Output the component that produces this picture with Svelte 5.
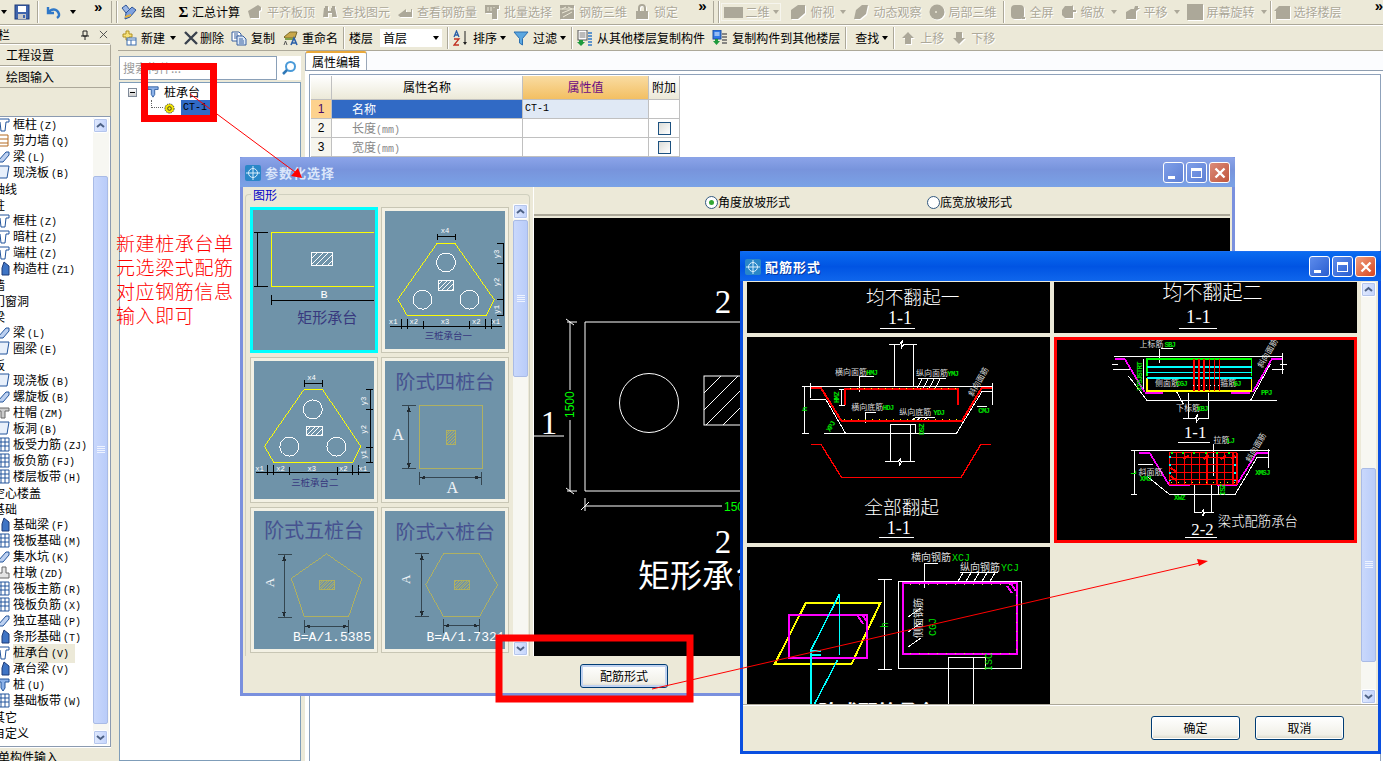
<script>
  const ICONS = {
    save: '<rect x="1" y="1" width="14" height="14" fill="#3f64ad" stroke="#1d3a78"/><rect x="4" y="2" width="8" height="6" fill="#fff"/><rect x="4" y="10" width="8" height="5" fill="#c8c8c8"/><rect x="9" y="11" width="2" height="3" fill="#3f64ad"/>',
    undo: '<path d="M3 3v6h6M3.5 8.5C6 4.500 12 4 14 10c.4 1.600-.6 3-2 4" fill="none" stroke="#2f78c8" stroke-width="2.400"/>',
    draw: '<path d="M1 4l4-3 4 5-4 3z" fill="#9bb7e6" stroke="#2f5597"/><path d="M5 9l6-6 4 3-6 7-5 2z" fill="#7fa2e0" stroke="#2f5597"/><path d="M4 13l6-2" stroke="#e0b040" stroke-width="2"/>',
    newi: '<path d="M2 4h3V1h3v3h3v3H8v3H5V7H2z" fill="#f7e27a" stroke="#b09020"/><rect x="6" y="8" width="9" height="7" fill="#fff" stroke="#3c6fb0"/><path d="M6 10h9M10 10v5" stroke="#3c6fb0"/>',
    del: '<path d="M2 2l12 12M14 2L2 14" stroke="#39414d" stroke-width="2.400"/>',
    copy: '<path d="M1 2h7l2 2v7H1z" fill="#fff" stroke="#38609f"/><path d="M3 4h4M3 6h5M3 8h5" stroke="#38609f"/><path d="M6 6h6l3 3v6H6z" fill="#dbe7f6" stroke="#38609f"/><path d="M8 9h4M8 11h5M8 13h5" stroke="#38609f"/>',
    ren: '<path d="M2 7l6-5h7l-2 6H3z" fill="#c8a84a" stroke="#7a6a2a"/><path d="M3 8h10v2H3z" fill="#7fa04a"/><path d="M9 15l3-7 3 7M10 13h4" fill="none" stroke="#2a5fa8" stroke-width="1.600"/><path d="M2 15l1.500-4 1.500 4" fill="none" stroke="#555"/>',
    sort: '<path d="M12 1v13" stroke="#222"/><path d="M10 12l2 3 2-3z" fill="#222"/><path d="M1 7l2.500-6L6 7M2 5h3" fill="none" stroke="#2a5fa8" stroke-width="1.300"/><path d="M1 9h5l-5 6h5" fill="none" stroke="#c03020" stroke-width="1.300"/>',
    filter: '<path d="M1 2h14L9.500 8.500V15l-3-2V8.500z" fill="#5ba7e0" stroke="#2a6fb0"/>',
    floorA: '<rect x="1" y="0" width="9" height="10" fill="#fff" stroke="#555"/><path d="M2.500 3h6M2.500 5h6M2.500 7h6" stroke="#777"/><path d="M2 10h4v2h2l-4 4-4-4h2z" fill="#1e9a3c"/><path d="M11 3h4M11 6h4M11 9h4M11 12h4M11 15h4" stroke="#2f78c8" stroke-width="1.500"/>',
    floorB: '<rect x="1" y="0" width="8" height="9" fill="#2f78e8" stroke="#2050a0"/><path d="M2.500 3h5M2.500 5h5" stroke="#fff"/><path d="M3 9h3v2h2l-3.500 4L1 11h2z" fill="#1e9a3c"/><path d="M10 4h5M10 7h5M10 10h5M10 13h5" stroke="#666" stroke-width="1.500"/>',
    col: '<path d="M1 2h12v3h-3l-1 9H5L4 5H1z" fill="#fff" stroke="#23559c"/>',
    wall: '<path d="M2 2h10v11H2z" fill="#fff" stroke="#b36a20"/><path d="M2 6h10M2 10h10" stroke="#b36a20"/>',
    beam: '<path d="M2 12l8-9h3v3L7 13H2z" fill="#bcd0f0" stroke="#23559c"/>',
    slab: '<path d="M3 1h10l-2 12H1z" fill="#e8f0fb" stroke="#23559c"/>',
    foot: '<path d="M8 1l5 4v9H6V7z" fill="#3f74c4" stroke="#1d3a78"/>',
    net: '<path d="M1 1h12v13H1z" fill="#fff" stroke="#23559c"/><path d="M1 5h12M1 9h12M5 1v13M9 1v13" stroke="#23559c"/>',
    pile: '<path d="M1 2h12v3H9v6l-2 3-2-3V5H1z" fill="#8db2e8" stroke="#23559c"/>',
    pier: '<path d="M6 2h4v6h3v5H1V8h5z" fill="#e4e4e4" stroke="#666"/>',
    cap: '<path d="M1 3h12v3H9v7H5V6H1z" fill="#ccc" stroke="#666"/>',
    g_down: '<path d="M5 2h6v6h3l-6 6-6-6h3z" fill="#aca899"/>',
    g_up: '<path d="M5 14h6V8h3L8 2 2 8h3z" fill="#aca899"/>',
    d_roof: '<path d="M1 7L11 1l3 2v3l-2 1v7H3z" fill="#aca899"/>',
    d_bin: '<path d="M2 4h4v3h3V4h4l2 9h-5V9H6v4H1z" fill="#aca899"/><path d="M3 2h3v2H3zM10 2h3v2h-3z" fill="#aca899"/>',
    d_rebar: '<path d="M1 11l8-6v3h5V5h1v8H3z" fill="#aca899"/>',
    d_batch: '<path d="M1 1h14v4h-2v10h-5V9H1z" fill="#aca899"/><path d="M4 3v4M7 3v4M10 3v1" stroke="#ece9d8"/>',
    d_net: '<rect x="1" y="1" width="14" height="14" fill="#aca899"/><path d="M3 5l4-2M9 3l4 2M3 9l10-4M4 13l9-5M1 5h14" stroke="#ece9d8"/>',
    d_lock: '<rect x="2" y="7" width="12" height="8" fill="#aca899"/><path d="M5 7V4a3 3 0 0 1 6 0v3" fill="none" stroke="#aca899" stroke-width="2"/>',
    d_box: '<path d="M1 6l7-5h7v8l-7 6H1z" fill="#aca899"/>',
    d_orbit: '<path d="M1 15l2-9 6-5h6l-2 9-6 5z" fill="#aca899"/>',
    d_ball: '<circle cx="8" cy="8" r="7.500" fill="#aca899"/><circle cx="7" cy="8" r="1" fill="#ece9d8"/>',
    d_full: '<rect x="1" y="1" width="13" height="14" rx="4" fill="#aca899"/><path d="M12 13h3v2h-3z" fill="#aca899"/>',
    d_zoom: '<path d="M1 6l3-4h7l1-1v5h3v2h-3v6H4l-3-3z" fill="#aca899"/>',
    d_pan: '<path d="M2 15V8l5-3h3l1-3h3v2h2L12 7v8z" fill="#aca899"/>',
    d_rot: '<rect x="0" y="0" width="16" height="16" fill="#aca899"/>',
    d_floor: '<path d="M0 7l5-5h11v13H2V7z" fill="#aca899"/>'
  };

  const tb1 = [
    { t: '平齐板顶', i: 'd_roof' }, { t: '查找图元', i: 'd_bin' }, { t: '查看钢筋量', i: 'd_rebar' },
    { t: '批量选择', i: 'd_batch' }, { t: '钢筋三维', i: 'd_net' }, { t: '锁定', i: 'd_lock' }
  ];
  const tb1b = [
    { t: '俯视', i: 'd_box', c: 1 }, { t: '动态观察', i: 'd_orbit' }, { t: '局部三维', i: 'd_ball' }
  ];
  const tb1c = [
    { t: '全屏', i: 'd_full' }, { t: '缩放', i: 'd_zoom', c: 1 }, { t: '平移', i: 'd_pan', c: 1 }, { t: '屏幕旋转', i: 'd_rot', c: 1 }
  ];

  const list = [
    ['框柱', '(Z)', 'col'], ['剪力墙', '(Q)', 'wall'], ['梁', '(L)', 'beam'], ['现浇板', '(B)', 'slab'], ['轴线'], ['柱'],
    ['框柱', '(Z)', 'col'], ['暗柱', '(Z)', 'col'], ['端柱', '(Z)', 'col'], ['构造柱', '(Z1)', 'foot'], ['墙'], ['门窗洞'], ['梁'],
    ['梁', '(L)', 'beam'], ['圈梁', '(E)', 'slab'], ['板'], ['现浇板', '(B)', 'slab'], ['螺旋板', '(B)', 'beam'], ['柱帽', '(ZM)', 'cap'],
    ['板洞', '(B)', 'slab'], ['板受力筋', '(ZJ)', 'net'], ['板负筋', '(FJ)', 'net'], ['楼层板带', '(H)', 'net'], ['空心楼盖'], ['基础'],
    ['基础梁', '(F)', 'foot'], ['筏板基础', '(M)', 'net'], ['集水坑', '(K)', 'beam'], ['柱墩', '(ZD)', 'pier'], ['筏板主筋', '(R)', 'net'],
    ['筏板负筋', '(X)', 'net'], ['独立基础', '(P)', 'beam'], ['条形基础', '(T)', 'foot'], ['桩承台', '(V)', 'col', 1], ['承台梁', '(V)', 'foot'],
    ['桩', '(U)', 'pile'], ['基础板带', '(W)', 'net'], ['其它'], ['自定义']
  ];

  const rows = [
    { n: 1, k: '名称', v: 'CT-1', sel: true },
    { n: 2, k: '长度(mm)', chk: true },
    { n: 3, k: '宽度(mm)', chk: true }
  ];

  function hatch(x, y, w, h, step) {
    let d = '';
    for (let c = step; c < w + h; c += step) {
      const x1 = x + Math.min(c, w), y1 = y + Math.max(0, c - w);
      const x2 = x + Math.max(0, c - h), y2 = y + Math.min(c, h);
      d += `M${x1} ${y1}L${x2} ${y2}`;
    }
    return d;
  }
  const gridV = [358, 380, 403, 425, 448, 470, 500, 522, 548, 560];
  const gridH = [610, 625, 645, 670, 690, 705];
  const redV = [432, 447, 462, 477, 492, 507];
</script>

{#snippet ico(name)}
  <svg class="ico" class:ghost={name.startsWith('d_') || name.startsWith('g_')} viewBox="0 0 16 16">{@html ICONS[name]}</svg>
{/snippet}

{#snippet toolItem(it)}
  <span class="tool off">{@render ico(it.i)}<span>{it.t}</span>{#if it.c}<i class="caret dim"></i>{/if}</span>
{/snippet}

{#snippet scrollbar(h, top, thumb)}
  <div class="sb" style="height:{h}px">
    <div class="sbtn"><svg viewBox="0 0 9 7"><path d="M1 5l3.500-3L8 5" fill="none" stroke="#4d6185" stroke-width="2"/></svg></div>
    <div style="height:{top}px"></div>
    <div class="thumb" style="height:{thumb}px"><svg viewBox="0 0 8 8"><path d="M0 .5h8M0 2.500h8M0 4.500h8M0 6.500h8" stroke="#eef3ff"/></svg></div>
    <div class="sbgap"></div>
    <div class="sbtn"><svg viewBox="0 0 9 7"><path d="M1 2l3.500 3L8 2" fill="none" stroke="#4d6185" stroke-width="2"/></svg></div>
  </div>
{/snippet}

{#snippet winBtns()}
  <div class="wbtns">
    <span class="wb"><i class="wmin"></i></span>
    <span class="wb"><i class="wmax"></i></span>
    <span class="wb wclose"><svg viewBox="0 0 12 12"><path d="M1.500 1.500l9 9M10.500 1.500l-9 9" stroke="#fff" stroke-width="2.400"/></svg></span>
  </div>
{/snippet}

{#snippet logo()}
  <svg class="logo" viewBox="0 0 16 16"><rect width="16" height="16" rx="2" fill="#2a87c8"/><circle cx="8" cy="8" r="4.500" fill="none" stroke="#d8eefc"/><path d="M8 1v14M1 8h14" stroke="#d8eefc"/></svg>
{/snippet}

<div class="desk">
  <!-- top toolbar -->
  <div class="tb1">
    <div class="tb1left">
      <i class="caret"></i>
      {@render ico('save')}
      <b class="vsep"></b>
      {@render ico('undo')}
      <i class="caret"></i>
      <span class="more">»</span>
    </div>
    <b class="grip gfirst"></b>
    <span class="tool">{@render ico('draw')}<span>绘图</span></span>
    <span class="tool sum"><em>Σ</em><span>汇总计算</span></span>
    {#each tb1 as it}{@render toolItem(it)}{/each}
    <span class="more m25">»</span>
    <b class="grip"></b>
    <span class="combo2"><i class="sw"></i>二维<i class="caret dim"></i></span>
    {#each tb1b as it}{@render toolItem(it)}{/each}
    <b class="vsep"></b>
    {#each tb1c as it}{@render toolItem(it)}{/each}
    <b class="vsep vtight"></b>
    <span class="tool off">{@render ico('d_floor')}<span>选择楼层</span></span>
    <span class="more mr">»</span>
  </div>

  <div class="main">
    <!-- navigation column -->
    <aside class="nav">
      <div class="navtitle"><span>栏</span>
        <svg class="pin" viewBox="0 0 10 10"><path d="M3 1h4v5H3zM1 6h8M5 6v4" fill="none" stroke="#222"/></svg>
        <svg class="pinx" viewBox="0 0 10 10"><path d="M1 1l8 8M9 1l-8 8" stroke="#444"/></svg>
      </div>
      <div class="navbtn">工程设置</div>
      <div class="navbtn">绘图输入</div>
      <div class="navblank"></div>
      <div class="navlist">
        <div class="items">
          {#each list as r}
            {#if r.length === 1}
              <div class="grp">{r[0]}</div>
            {:else}
              <div class="item"><svg class="lico" viewBox="0 0 14 16">{@html ICONS[r[2]]}</svg><span class="lab" class:hi={r[3]}>{r[0]}<small>{r[1]}</small></span></div>
            {/if}
          {/each}
        </div>
        {@render scrollbar(627, 43, 548)}
      </div>
      <div class="navfoot">单构件输入</div>
    </aside>
    <div class="vsplit"></div>

    <div class="work">
      <div class="tb2">
        <span class="tool t-new">{@render ico('newi')}<span>新建</span><i class="caret"></i></span>
        <span class="tool t-del">{@render ico('del')}<span>删除</span></span>
        <span class="tool">{@render ico('copy')}<span>复制</span></span>
        <span class="tool">{@render ico('ren')}<span>重命名</span></span>
        <b class="vsep"></b>
        <span class="lbl">楼层</span>
        <span class="combo"><span>首层</span><i class="caret"></i></span>
        <b class="vsep"></b>
        <span class="tool">{@render ico('sort')}<span>排序</span><i class="caret"></i></span>
        <span class="tool">{@render ico('filter')}<span>过滤</span><i class="caret"></i></span>
        <b class="vsep"></b>
        <span class="tool">{@render ico('floorA')}<span>从其他楼层复制构件</span></span>
        <span class="tool">{@render ico('floorB')}<span>复制构件到其他楼层</span></span>
        <b class="vsep"></b>
        <span class="lbl find">查找<i class="caret"></i></span>
        <b class="vsep"></b>
        <span class="tool off up">{@render ico('g_up')}<span>上移</span></span>
        <span class="tool off">{@render ico('g_down')}<span>下移</span></span>
      </div>

      <div class="panes">
        <section class="comp">
          <div class="search">
            <div class="sinput">搜索构件...</div>
            <svg class="sglass" viewBox="0 0 16 16"><circle cx="9.500" cy="6.500" r="4.500" fill="#fff" stroke="#4a9ad8" stroke-width="2"/><path d="M6 10l-4 4" stroke="#2f78b8" stroke-width="2.500"/></svg>
          </div>
          <div class="tree">
            <div class="node">
              <span class="minus"></span>
              <svg class="nodeico" viewBox="0 0 14 16">{@html ICONS.pile}</svg>
              <span>桩承台</span>
            </div>
            <div class="node child">
              <span class="elbow"></span>
              <svg class="gear" viewBox="0 0 12 12"><circle cx="6" cy="6" r="5" fill="#f4e600" stroke="#333" stroke-dasharray="1.500 1"/><circle cx="6" cy="6" r="2" fill="#f4e600" stroke="#333"/></svg>
              <span class="picked">CT-1</span>
            </div>
          </div>
        </section>

        <section class="props">
          <div class="tabs"><span class="tab">属性编辑</span></div>
          <div class="gridwrap">
            <div class="pgrid">
              <div class="ph"></div>
              <div class="ph">属性名称</div>
              <div class="ph val">属性值</div>
              <div class="ph">附加</div>
              {#each rows as r}
                <div class="pn" class:on={r.sel}>{r.n}</div>
                <div class="pk" class:on={r.sel}>{r.k.replace('(mm)', '')}{#if r.chk}<small>(mm)</small>{/if}</div>
                <div class="pv" class:on={r.sel}>{r.v ?? ''}</div>
                <div class="pa">{#if r.chk}<i class="chk"></i>{/if}</div>
              {/each}
            </div>
          </div>
        </section>
      </div>
    </div>
  </div>

  <!-- red note -->
  <div class="note">新建桩承台单<br />元选梁式配筋<br />对应钢筋信息<br />输入即可</div>

  <!-- dialog 1 -->
  <div class="dlg dlg1">
    <div class="title t1">{@render logo()}<span>参数化选择</span>{@render winBtns()}</div>
    <div class="d1body">
      <div class="group">
        <span class="legend">图形</span>
        <div class="thumbs">
          <div class="thumb-cell picked-cell">
            <svg viewBox="36 163 367 420" class="cad">
              <path d="M403 229H88V394H403" class="y" />
              <path d="M46 229V394M36 229H78M36 394H78M88 418V448M88 436H403" class="k" />
              <rect x="211" y="289" width="64" height="39" class="w" />
              <path d={hatch(211, 289, 64, 39, 18)} class="w" />
              <text x="250" y="427" class="wt" font-size="36" text-anchor="middle">B</text>
              <text x="260" y="505" class="tt" font-size="46" text-anchor="middle">矩形承台</text>
            </svg>
          </div>
          <div class="thumb-cell">
            <svg viewBox="428 162 368 420" class="cad">
              <path d="M588 259H642L763 432L738 481H496L467 432Z" class="y" />
              <circle cx="615" cy="318" r="29" class="w" /><circle cx="543" cy="432" r="29" class="w" /><circle cx="687" cy="432" r="29" class="w" />
              <rect x="592" y="373" width="46" height="31" class="w" /><path d={hatch(592, 373, 46, 31, 14)} class="w" />
              <path d="M590 240H643M590 231V249M643 231V249M790 259V481M772 259H793M772 320H793M772 432H793M772 481H793M442 514H788M478 492V522M497 492V522M545 498V522M688 498V522M737 492V522M755 492V522" class="k" />
              <text x="612" y="229" class="sm">x4</text><text x="453" y="507" class="sm">x1</text><text x="516" y="507" class="sm">x2</text><text x="612" y="507" class="sm">x3</text><text x="708" y="507" class="sm">x2</text><text x="768" y="507" class="sm">x1</text>
              <text transform="translate(778 292) rotate(-90)" class="sm">y3</text><text transform="translate(778 378) rotate(-90)" class="sm">y2</text><text transform="translate(778 462) rotate(-90)" class="sm">y1</text>
              <text x="622" y="553" class="tt" font-size="29" text-anchor="middle">三桩承台一</text>
            </svg>
          </div>
          <div class="thumb-cell">
            <svg viewBox="36 612 367 420" class="cad">
              <path d="M190 697H245L363 872L338 922H97L68 872Z" class="y" />
              <circle cx="216" cy="759" r="29" class="w" /><circle cx="144" cy="873" r="29" class="w" /><circle cx="288" cy="873" r="29" class="w" />
              <rect x="196" y="811" width="49" height="27" class="w" /><path d={hatch(196, 811, 49, 27, 14)} class="w" />
              <path d="M190 681H245M190 670V690M245 670V690M392 697V922M380 697H400M380 760H400M380 874H400M380 922H400M42 952H390M78 930V960M97 930V960M145 936V960M290 936V960M338 930V960M357 930V960" class="k" />
              <text x="212" y="670" class="sm">x4</text><text x="53" y="948" class="sm">x1</text><text x="117" y="948" class="sm">x2</text><text x="213" y="948" class="sm">x3</text><text x="309" y="948" class="sm">x2</text><text x="369" y="948" class="sm">x1</text>
              <text transform="translate(379 733) rotate(-90)" class="sm">y3</text><text transform="translate(379 820) rotate(-90)" class="sm">y2</text><text transform="translate(379 897) rotate(-90)" class="sm">y1</text>
              <text x="222" y="992" class="tt" font-size="29" text-anchor="middle">三桩承台二</text>
            </svg>
          </div>
          <div class="thumb-cell">
            <svg viewBox="428 612 368 420" class="cad">
              <text x="613" y="695" class="tt2" font-size="61" text-anchor="middle">阶式四桩台</text>
              <rect x="533" y="748" width="194" height="193" class="oy" />
              <rect x="616" y="823" width="28" height="43" class="oy" /><path d={hatch(616, 823, 28, 43, 9)} class="oy" />
              <path d="M501 748V941M480 748H524M480 941H524M533 968H722M533 950V990M725 950V990" class="d" />
              <path d="M495 766L501 748L507 766ZM495 923L501 941L507 923ZM552 962L535 968L552 974ZM705 962L722 968L705 974Z" class="df" />
              <text x="468" y="852" class="wa" font-size="50" text-anchor="middle">A</text>
              <text x="635" y="1014" class="wa" font-size="50" text-anchor="middle">A</text>
            </svg>
          </div>
          <div class="thumb-cell">
            <svg viewBox="36 27 367 420" class="cad">
              <text x="220" y="110" class="tt2" font-size="61" text-anchor="middle">阶式五桩台</text>
              <path d="M258 157L366 232L325 350H190L150 232Z" class="oy" />
              <rect x="235" y="240" width="46" height="27" class="oy" /><path d={hatch(235, 240, 46, 27, 8)} class="oy" />
              <path d="M128 160V352M108 160H152M108 352H152M190 379H325M190 360V400M325 360V400" class="d" />
              <path d="M122 178L128 160L134 178ZM122 334L128 352L134 334ZM208 373L192 379L208 385ZM308 373L323 379L308 385Z" class="df" />
              <text transform="translate(97 245) rotate(-90)" class="wa" font-size="40" text-anchor="middle">A</text>
              <text x="155" y="424" class="eq">B=A/1.5385</text>
            </svg>
          </div>
          <div class="thumb-cell">
            <svg viewBox="428 27 368 420" class="cad">
              <text x="613" y="110" class="tt2" font-size="61" text-anchor="middle">阶式六桩台</text>
              <path d="M607 157H718L773 252L718 349H607L553 252Z" class="oy" />
              <rect x="641" y="238" width="46" height="27" class="oy" /><path d={hatch(641, 238, 46, 27, 8)} class="oy" />
              <path d="M541 157V350M520 157H564M520 350H564M607 377H718M607 358V398M718 358V398" class="d" />
              <path d="M535 175L541 157L547 175ZM535 332L541 350L547 332ZM624 371L609 377L624 383ZM701 371L716 377L701 383Z" class="df" />
              <text transform="translate(504 235) rotate(-90)" class="wa" font-size="40" text-anchor="middle">A</text>
              <text x="555" y="424" class="eq">B=A/1.7321</text>
            </svg>
          </div>
        </div>
        {@render scrollbar(452, 1, 157)}
      </div>

      <div class="d1right">
        <div class="radios">
          <label class="radio r1"><i class="rdot on"></i>角度放坡形式</label>
          <label class="radio r2"><i class="rdot"></i>底宽放坡形式</label>
        </div>
        <svg class="canvas1" viewBox="534 218 696 438">
          <path d="M585 322H800V491H585Z M567 322H577M567 491H577M570 322V390M570 420V491M534 436H564M585 506H722M585 498V511M566 319L574 325M566 488L574 494M581 510L589 502" class="cw" />
          <circle cx="649" cy="403" r="29.500" class="cw" />
          <rect x="704" y="376" width="120" height="49" class="cw" /><path d={hatch(704, 376, 120, 49, 17)} class="cw" />
          <text x="723" y="313" class="big" text-anchor="middle">2</text>
          <text x="549" y="434" class="big" text-anchor="middle">1</text>
          <text x="723" y="553" class="big" text-anchor="middle">2</text>
          <text x="638" y="587" class="bigc">矩形承台</text>
          <text transform="translate(574 418) rotate(-90)" class="gr">1500</text>
          <text x="724" y="511" class="gr">1500</text>
        </svg>
      </div>
    </div>
    <div class="d1foot"><button class="btn w88">配筋形式</button></div>
  </div>

  <!-- dialog 2 -->
  <div class="dlg dlg2">
    <div class="title t2">{@render logo()}<span>配筋形式</span>{@render winBtns()}</div>
    <div class="d2body">
      <div class="cells">
        <svg class="cell h51" viewBox="21 96 909 153">
          <text x="518" y="162" class="zh" font-size="56" text-anchor="middle">均不翻起一</text>
          <text x="480" y="222" class="num" font-size="54" text-anchor="middle">1-1</text>
          <path d="M420 235H525" class="cw3" />
        </svg>
        <svg class="cell h51" viewBox="12 96 908 153">
          <text x="487" y="150" class="zh" font-size="60" text-anchor="middle">均不翻起二</text>
          <text x="445" y="220" class="num" font-size="56" text-anchor="middle">1-1</text>
          <path d="M385 235H500" class="cw3" />
        </svg>

        <svg class="cell h206" viewBox="21 262 909 618">
          <path d="M448 283H480L487 272L484 296L492 283H530M463 283V408M520 283V408M205 409H757M185 409H207M193 409V551M185 551H207M252 550H650M258 450L316 550M210 450H258M210 400V445M650 550L727 424M757 400V465M727 424H760M710 469H740M303 420V465M296 418H316M296 466H316" class="cw3" />
          <path d="M451 523V636M510 523V636M451 523H527M436 636H475L482 625L478 648L485 636H525M527 523V550M403 381H358V428M407 487H376V520M535 385H618M548 385L530 420M566 385L548 420M584 385L566 420M602 385L584 420M510 515L530 502H585M525 515L545 502M545 515L565 502" class="cw3" />
          <path d="M213 415H243L305 515H665L725 415H755" class="red" />
          <path d="M316 467V417H654V467" class="red" />
          <path d="M213 584H243L305 684H663L723 584H752" class="red r4" />
          <path d="M330 417H650M312 510H660" class="dots" />
          <text x="285" y="376" class="lb">横向面筋</text><text x="379" y="376" class="gn">HMJ</text>
          <text x="528" y="379" class="lb">纵向面筋</text><text x="622" y="379" class="gn">YMJ</text>
          <text x="334" y="480" class="lb">横向底筋</text><text x="428" y="481" class="gn">HDJ</text>
          <text x="478" y="495" class="lb">纵向底筋</text><text x="580" y="496" class="gn">YDJ</text>
          <text x="715" y="491" class="gn">CMJ</text>
          <text transform="translate(698 442) rotate(-60)" class="lb">斜向面筋</text>
          <text transform="translate(298 460) rotate(-90)" class="gn">HMZ</text>
          <text transform="translate(200 485) rotate(-90)" class="gn">h</text>
          <text transform="translate(270 548) rotate(-60)" class="gn">XPJ</text>
          <text transform="translate(552 556) rotate(-90)" class="gn">DSZ</text>
          <text x="485" y="792" class="zh" font-size="56" text-anchor="middle">全部翻起</text>
          <text x="476" y="852" class="num" font-size="54" text-anchor="middle">1-1</text>
          <path d="M417 864H522" class="cw3" />
        </svg>

        <svg class="cell h206" viewBox="12 264 908 616">
          <path d="M192 323H698M333 298H368M328 298V340M185 345H205M190 360H240M235 380L292 455H680M600 455L660 345M690 345H710M665 360H700M698 312V375M415 430V508M475 430V508M400 508H435L442 495L438 520L446 508H475M378 425L400 465M280 330V425" class="cw3" />
          <path d="M195 329H224L283 428M285 432H340M543 432H600M608 428L665 329H695" class="mg" />
          <path d="M290 380V330H604V380" class="gr3" />
          <path d="M290 385V426H604V385" class="yl" />
          {#each [353, 370, 386] as y}<path d="M290 {y}H604" class="cy" />{/each}
          {#each redV as x}<path d="M{x} 330V425" class="red r4" />{/each}
          <path d="M430 410H510" class="dotw" />
          <text x="268" y="292" class="lb">上标筋</text><text x="343" y="292" class="gn">SBJ</text>
          <text x="315" y="409" class="lb">侧面筋</text><text x="378" y="409" class="gn">CGJ</text>
          <text x="510" y="411" class="lb">箍筋</text><text x="550" y="411" class="gn">GJ</text>
          <text x="378" y="485" class="lb">下标筋</text><text x="440" y="485" class="gn">XBJ</text>
          <text x="632" y="438" class="gn">PPJ</text>
          <text transform="translate(275 425) rotate(-90)" class="gn">XTSJSTRT</text>
          <text transform="translate(635 358) rotate(-60)" class="lb">斜向面筋</text>
          <text x="435" y="566" class="num" font-size="50" text-anchor="middle">1-1</text>
          <path d="M385 578H480" class="cw3" />

          <path d="M245 604H660M252 604V735M242 604H262M242 735H262M490 585V680M290 680L358 735H555L620 625M265 645H310M620 625H655M655 600V655M432 708V790M485 708V790M432 790H455L460 780L458 800L464 790H490M505 708V735" class="cw3" />
          <path d="M268 610H298L358 708H420M500 708H558L620 610H652" class="mg" />
          {#each gridV as x}<path d="M{x} 610V705" class="red r4" />{/each}
          {#each gridH as y}<path d="M358 {y}H560" class="red r4" />{/each}
          <path d="M362 612H556" class="dotg" /><path d="M362 700H556" class="dots" /><path d="M360 620V695M554 620V695" class="dotc" />
          <path d="M400 630L415 618M460 630L475 618M512 630L527 618M362 655L378 668M362 680L378 692M545 630L555 618" class="red" />
          <text x="490" y="580" class="lb">拉筋</text><text x="530" y="580" class="gn">LJ</text>
          <text x="265" y="678" class="lb">斜面筋</text><text x="270" y="696" class="gn">XMJ</text>
          <text x="615" y="678" class="gn">XMSJ</text><text x="372" y="751" class="gn">XWZ</text>
          <text transform="translate(258 676) rotate(-90)" class="gn">L</text>
          <text transform="translate(524 738) rotate(-90)" class="gn">ISZ</text>
          <text transform="translate(600 640) rotate(-60)" class="lb">斜向面筋</text>
          <text x="503" y="830" class="zh" font-size="40">梁式配筋承台</text>
          <text x="457" y="856" class="num" font-size="50" text-anchor="middle">2-2</text>
          <path d="M405 865H500" class="cw3" />
          <rect x="16.500" y="268.500" width="899" height="607" class="redframe" />
        </svg>

        <svg class="cell h157" viewBox="747 547 303 157">
          <path d="M805.600 603.300H880.200L851.500 664H774.800Z" class="yl1" />
          <path d="M789 614.700H867V658H789Z M862 614L867 622M858 616L863 624" class="mg1" />
          <path d="M839.600 594L811 650V705M839.600 594V655M837.500 660L814 705M811 651H821M811 655H821" class="cy1" />
          <path d="M884 579V669M878 579H892M878 669H892M898 581H1021V668H898ZM924.400 588V563H937.600M963 573L957 583M971 573L965 583M979 573L973 583M987 573L981 583M995 573L989 583M960 572H998M908 617L921 608M908 632L921 623M908 647L921 638M948.600 657V705M973.600 657V705M948.600 657H985V669" class="cw1" />
          <path d="M903 583H1017V654H903Z M1011 584L1016 591M1007 586L1012 593" class="mg1" />
          <path d="M910 584H1010M910 653H1010M1016 595V650" class="ydot" />
          <text x="911" y="561" class="lb1">横向钢筋</text><text x="952" y="561" class="gn1">XCJ</text>
          <text x="960" y="571" class="lb1">纵向钢筋</text><text x="1001" y="571" class="gn1">YCJ</text>
          <text transform="translate(922 638) rotate(-90)" class="lb1">侧面钢筋</text>
          <text transform="translate(936 636) rotate(-90)" class="gn1">CGJ</text>
          <text transform="translate(992 671) rotate(-90)" class="gn1">ISC</text>
          <text transform="translate(888 628) rotate(-90)" class="gn1">h</text>
          <text x="818" y="720" class="zhb">阶式配筋承台</text>
        </svg>
        <div class="cell-empty"></div>
      </div>
      {@render scrollbar(422, 171, 194)}
    </div>
    <div class="d2foot">
      <button class="btn w89">确定</button>
      <button class="btn w89">取消</button>
    </div>
  </div>

  <!-- annotations drawn over everything -->
  <svg class="marks" viewBox="0 0 1383 761">
    <rect x="144.500" y="66.500" width="69" height="52" class="box" />
    <rect x="499" y="638" width="191" height="61" class="box" />
    <path d="M190 94L299 175M652 689L1200 563" class="arrow" />
    <path d="M302 178L291 176L298 168ZM1208 561L1197 559L1199 566Z" class="head" />
  </svg>
</div>

<style>
  :global(body) { margin: 0; }
  .desk {
    position: relative; width: 1383px; height: 761px; overflow: hidden;
    display: flex; flex-direction: column;
    background: #ece9d8; color: #000;
    font: 12px/16px "Noto Sans CJK SC", "Liberation Sans", sans-serif;
  }
  small { font: 10px/16px "Liberation Mono", monospace; margin-left: 2px; }
  i, b { display: block; font-style: normal; }

  .ico { width: 16px; height: 16px; flex: none; }
  .ghost { filter: drop-shadow(1px 1px 0 #fff); }
  .tool { display: inline-flex; align-items: center; gap: 4px; white-space: nowrap; flex: none; }
  .off { color: #aca899; text-shadow: 1px 1px 0 #fff; }
  .caret { flex: none; width: 0; height: 0; border: 3.500px solid transparent; border-top: 4px solid #000; border-bottom: 0; margin-left: 2px; }
  .caret.dim { border-top-color: #aca899; }
  .vsep { flex: none; width: 1px; height: 22px; background: #aca899; box-shadow: 1px 0 0 #fff; }
  .grip { flex: none; width: 4px; height: 22px; border-left: 1px solid #aca899; border-right: 1px solid #aca899; box-shadow: 1px 0 0 #fff; }
  .more { font: 700 15px/14px "Liberation Sans", sans-serif; flex: none; align-self: flex-start; margin-top: -1px; }

  .tb1 {
    flex: none; height: 24px; display: flex; align-items: center; gap: 7px;
    border-bottom: 1px solid #aca899;
  }
  .tb1 .vsep { margin: 0 -1px; }
  .tb1 .vtight { margin: 0 -4px; }
  .tb1left { width: 105px; flex: none; display: flex; align-items: center; gap: 7px; margin-left: -1px; }
  .tb1left .caret { margin-left: 2px; }
  .tb1left .vsep { margin: 0; }
  .tb1left .more { margin-left: 11px; }
  .gfirst { margin-right: -3px; }
  .sum em { font: 700 15px/16px "Liberation Serif", serif; width: 17px; text-align: center; }
  .sum { gap: 0; margin-left: 3px; }
  .m25 { margin-left: 13px; }
  .mr { margin-left: auto; margin-right: 0; }
  .combo2 {
    flex: none; width: 58px; height: 16px; border: 1px solid #f6f5ee; display: flex; align-items: center; gap: 2px;
    color: #aca899; text-shadow: 1px 1px 0 #fff; margin-left: -5px; margin-right: 2px;
  }
  .combo2 .sw { width: 19px; height: 11px; background: #aca899; margin-left: 2px; }

  .main { flex: 1; min-height: 0; display: flex; border-top: 1px solid #fff; }
  .nav { width: 111px; flex: none; display: flex; flex-direction: column; }
  .vsplit { width: 7px; flex: none; }
  .navtitle { flex: none; height: 17px; display: flex; align-items: center; border-bottom: 1px solid #aca899; margin-right: 1px; }
  .navtitle span { margin-left: -2px; }
  .pin { width: 10px; height: 10px; margin-left: auto; }
  .pinx { width: 9px; height: 9px; margin: 0 2px 0 9px; }
  .navbtn { flex: none; height: 20px; line-height: 20px; padding-left: 6px; border-bottom: 1px solid #aca899; border-top: 1px solid #fff; border-right: 1px solid #aca899; }
  .navblank { flex: none; height: 28px; border-right: 1px solid #aca899; }
  .navlist { flex: none; height: 629px; background: #fff; display: flex; border: 1px solid #8b9ab0; border-left: 0; position: relative; overflow: hidden; }
  .items { width: 93px; flex: none; }
  .navlist .sb { margin-top: 1px; }
  .item { height: 16px; display: flex; align-items: center; white-space: nowrap; }
  .lico { width: 14px; height: 16px; margin-left: -4px; margin-right: 3px; flex: none; }
  .lab { padding-right: 6px; }
  .lab.hi { background: #ece9d8; }
  .grp { height: 16px; margin-left: -7px; white-space: nowrap; }
  .navfoot { flex: 1; min-height: 0; padding-top: 1px; margin-left: -2px; border-top: 1px solid #fff; white-space: nowrap; overflow: hidden; }

  .sb { flex: none; width: 16px; display: flex; flex-direction: column; background: #f7f7f2; }
  .sbtn { flex: none; width: 15px; height: 15px; box-sizing: border-box; border: 1px solid #fff; border-radius: 2px; background: linear-gradient(90deg, #e1eafe, #c3d3fc); box-shadow: 0 0 0 1px #b4c5ec inset; display: flex; align-items: center; justify-content: center; }
  .sbtn svg { width: 9px; height: 7px; }
  .thumb { flex: none; width: 15px; box-sizing: border-box; border-radius: 2px; border: 1px solid #a9bbe6; background: linear-gradient(90deg, #c9d8fc, #b9ccf9); display: flex; align-items: center; justify-content: center; }
  .thumb svg { width: 8px; height: 8px; }
  .sbgap { flex: 1; }

  .work { flex: 1; min-width: 0; display: flex; flex-direction: column; }
  .tb2 { flex: none; height: 24px; display: flex; align-items: center; gap: 7px; border-bottom: 1px solid #aca899; }
  .tb2 .vsep { margin: 0 -2px; }
  .t-new { margin-left: 3px; }
  .t-del .ico { margin-right: -3px; }
  .tb2 .tool .caret { margin-left: -1px; }
  .tb2 .t-new .caret { margin-left: 1px; }
  .lbl { display: inline-flex; align-items: center; flex: none; }
  .find { margin-left: 4px; }
  .lbl .caret { margin-left: 3px; }
  .up { margin-left: 1px; }
  .combo { flex: none; width: 62px; height: 18px; background: #fff; display: flex; align-items: center; justify-content: space-between; padding: 0 3px 0 3px; box-sizing: border-box; margin-left: 0; }

  .panes { flex: 1; min-height: 0; display: flex; }
  .comp { width: 184px; flex: none; padding: 5px 1px 0 1px; box-sizing: border-box; display: flex; flex-direction: column; }
  .search { height: 24px; flex: none; display: flex; align-items: center; background: #fff; }
  .sinput { flex: 1; height: 24px; box-sizing: border-box; border: 1px solid #8aa0b8; color: #999; padding: 3px 3px; line-height: 16px; }
  .sglass { width: 16px; height: 16px; margin: 0 4px; }
  .tree { flex: 1; margin-top: 2px; background: #fff; border: 1px solid #7f9db9; box-sizing: border-box; padding: 1px 0 0 8px; }
  .node { height: 16px; display: flex; align-items: center; }
  .minus { width: 9px; height: 9px; box-sizing: border-box; border: 1px solid #7f8a99; background: linear-gradient(#fff, #ccc); position: relative; flex: none; margin-right: 10px; }
  .minus::after { content: ""; position: absolute; left: 1px; right: 1px; top: 3px; height: 1px; background: #000; }
  .nodeico { width: 12px; height: 14px; margin-right: 5px; flex: none; }
  .child { padding-left: 23px; }
  .elbow { width: 12px; height: 8px; box-sizing: border-box; border-left: 1px dotted #666; border-bottom: 1px dotted #666; align-self: flex-start; flex: none; margin-right: 1px; }
  .gear { width: 11px; height: 11px; flex: none; margin-right: 6px; }
  .picked { background: #316ac5; width: 32px; height: 16px; font: 10px/16px "Liberation Mono", monospace; padding-left: 2px; box-sizing: border-box; }

  .props { flex: 1; min-width: 0; display: flex; flex-direction: column; margin-left: 3px; background: #fff; }
  .tabs { height: 19px; flex: none; background: #fbfcfe; border-bottom: 1px solid #8f9eb0; display: flex; }
  .tab { width: 62px; height: 19px; box-sizing: border-box; background: #fff; border: 1px solid #9aa7b8; border-top: 2px solid #e9a83a; border-bottom: 0; border-radius: 3px 3px 0 0; text-align: center; line-height: 17px; }
  .gridwrap { flex: 1; margin: 3px 2px 0 4px; border: 1px solid #8fa2bb; border-bottom: 0; padding: 1px 0 0 1px; }
  .pgrid { display: grid; grid-template-columns: 21px 191px 126px 31px; grid-auto-rows: 19px; grid-template-rows: 24px; }
  .ph { background: linear-gradient(#fff, #ece9d8); border-right: 1px solid #c0c0c0; border-bottom: 1px solid #c0c0c0; text-align: center; line-height: 22px; }
  .ph.val { background: linear-gradient(#f9dca2, #f3bf62); color: #6a0a82; }
  .pn, .pk, .pv, .pa { border-right: 1px solid #c0c0c0; border-bottom: 1px solid #c0c0c0; line-height: 18px; }
  .pn { background: #f6f5ee; text-align: center; font: 12px/18px "Liberation Sans", sans-serif; }
  .pn.on { background: #fdd28d; color: #4a0a6a; }
  .pk { padding-left: 20px; color: #888; }
  .pk small { margin-left: 0; }
  .pk.on { background: #316ac5; color: #fff; }
  .pv { padding-left: 2px; font: 10px/18px "Liberation Mono", monospace; }
  .pv.on { background: #e0e9f5; }
  .pa { display: flex; align-items: center; justify-content: center; }
  .chk { width: 13px; height: 13px; box-sizing: border-box; border: 1px solid #1c5180; background: linear-gradient(135deg, #dcdcd7, #fff); }

  .note { position: absolute; left: 116px; top: 231px; color: #ff0000; font-size: 19px; line-height: 24px; letter-spacing: 0.6px; white-space: nowrap; font-weight: 300; }

  .dlg { position: absolute; box-sizing: border-box; display: flex; flex-direction: column; background: #ece9d8; }
  .dlg1 { left: 240px; top: 157px; width: 995px; height: 539px; border: 3px solid #7a90de; border-top: 1px solid #8aa3e6; }
  .dlg2 { left: 740px; top: 251px; width: 641px; height: 503px; border: 3px solid #0a4fe0; border-top: 1px solid #1a6df0; }
  .title { height: 29px; flex: none; display: flex; align-items: center; margin: 0 -3px; padding: 0 5px; font: 700 13px/16px "Noto Sans CJK SC", sans-serif; letter-spacing: 1px; }
  .t1 { background: linear-gradient(#8aa3e8, #7894dc 40%, #7aa2e6); color: #dbe6fa; }
  .t2 { background: linear-gradient(#0a6bf0, #0054e3 50%, #0f66ec); color: #fff; text-shadow: 1px 1px 0 #0a3aa0; }
  .logo { width: 16px; height: 16px; margin-right: 4px; flex: none; }
  .wbtns { margin-left: auto; display: flex; gap: 2px; }
  .wb { width: 21px; height: 21px; box-sizing: border-box; border: 1px solid #fff; border-radius: 3px; background: linear-gradient(135deg, #5d8cec, #2a5ed0); display: flex; align-items: center; justify-content: center; position: relative; }
  .t1 .wb { background: linear-gradient(135deg, #7f9fe8, #5e80d6); }
  .wclose { background: linear-gradient(135deg, #f0a080, #d8451e) !important; }
  .t1 .wclose { background: linear-gradient(135deg, #dc8c7a, #c0553c) !important; }
  .wclose svg { width: 12px; height: 12px; }
  .wmin { width: 7px; height: 3px; background: #fff; margin-top: 9px; margin-right: 4px; }
  .wmax { width: 11px; height: 10px; box-sizing: border-box; border: 1px solid #fff; border-top-width: 3px; }

  .d1body { height: 469px; flex: none; display: flex; }
  .group { width: 285px; height: 462px; box-sizing: border-box; flex: none; margin: 7px 3px 0 2px; border: 1px solid #d0d0bf; border-bottom: 0; border-radius: 4px 4px 0 0; padding: 12px 0 0 4px; display: flex; gap: 4px; position: relative; }
  .group .sb { margin-top: -3px; width: 15px; }
  .legend { position: absolute; left: 5px; top: -8px; background: #ece9d8; color: #0000c8; padding: 0 2px; line-height: 15px; }
  .thumbs { display: grid; grid-template-columns: 128px 128px; grid-auto-rows: 146px; gap: 4px 3px; width: 259px; flex: none; align-content: start; }
  .thumb-cell { box-sizing: border-box; padding: 3px; border: 1px solid #fff; outline: 1px solid #c8c6b4; outline-offset: -1px; background: #f3f1e4; }
  .picked-cell { border: 3px solid #00ffff; outline: 0; padding: 1px; background: #6f93a9; }
  .thumb-cell svg { display: block; width: 100%; height: 100%; background: #6f93a9; }
  .cad { shape-rendering: crispEdges; }
  .y { fill: none; stroke: #ffff00; stroke-width: 3; }
  .w { fill: none; stroke: #fff; stroke-width: 3; }
  .k { fill: none; stroke: #000; stroke-width: 3; }
  .oy { fill: none; stroke: #b0b060; stroke-width: 3; }
  .d { fill: none; stroke: #33444f; stroke-width: 3; }
  .df { fill: #222c33; }
  .wt, .sm { fill: #fff; font-family: "Liberation Mono", monospace; }
  .sm { font-size: 22px; text-anchor: middle; }
  .tt { fill: #38397e; font-family: "Noto Sans CJK SC", sans-serif; }
  .tt2 { fill: #465290; font-family: "Noto Sans CJK SC", sans-serif; }
  .wa { fill: #eef2f6; font-family: "Liberation Serif", serif; }
  .eq { fill: #fff; font: 40px "Liberation Mono", monospace; }

  .d1right { flex: 1; min-width: 0; margin-right: 2px; display: flex; flex-direction: column; border-left: 1px solid #fff; }
  .radios { height: 29px; flex: none; display: flex; align-items: center; border-bottom: 2px solid #aca899; box-sizing: border-box; padding-top: 3px; }
  .radio { display: inline-flex; align-items: center; gap: 0; white-space: nowrap; }
  .r1 { margin-left: 171px; }
  .r2 { margin-left: 137px; }
  .rdot { width: 13px; height: 13px; box-sizing: border-box; border: 1px solid #33597f; border-radius: 50%; background: #fff; display: flex; align-items: center; justify-content: center; }
  .rdot.on::after { content: ""; width: 5px; height: 5px; border-radius: 50%; background: #33a633; }
  .canvas1 { display: block; width: 696px; height: 438px; background: #000; flex: none; margin-top: 2px; }
  .cw { fill: none; stroke: #fff; stroke-width: 1; }
  .big { fill: #fff; font: 33px "Liberation Serif", serif; }
  .bigc { fill: #fff; font: 32px "Noto Sans CJK SC", sans-serif; }
  .gr { fill: #00ff00; font: 12px "Liberation Sans", sans-serif; }

  .d1foot { flex: 1; display: flex; align-items: flex-start; padding: 8px 0 0 337px; }
  .btn { padding: 0; height: 24px; background: linear-gradient(#fff, #f1f0e8 80%, #d9d6c6); border: 1px solid #003c74; border-radius: 3px; font: 12px/16px "Noto Sans CJK SC", sans-serif; color: #000; box-shadow: inset 0 0 0 1px #fff; }
  .w88 { width: 88px; box-shadow: inset 0 0 0 2px #c0d2f0; }
  .w89 { width: 89px; }

  .d2body { flex: none; height: 422px; margin-top: 1px; display: flex; padding-left: 4px; gap: 4px; }
  .cells { display: grid; grid-template-columns: 303px 303px; grid-template-rows: 51px 206px 157px; gap: 4px; width: 610px; flex: none; height: 422px; overflow: hidden; align-content: start; }
  .cell { display: block; width: 303px; background: #000; shape-rendering: crispEdges; }
  .h51 { height: 51px; }
  .h206 { height: 206px; }
  .h157 { height: 157px; }
  .zh { fill: #fff; font-family: "Noto Sans CJK SC", sans-serif; font-weight: 300; }
  .zhb { fill: #fff; font: 700 20px "Noto Sans CJK SC", sans-serif; }
  .num { fill: #fff; font-family: "Liberation Serif", serif; }
  .cw3 { fill: none; stroke: #fff; stroke-width: 3; }
  .red { fill: none; stroke: #ff0000; stroke-width: 6; }
  .r4 { stroke-width: 4; }
  .mg { fill: none; stroke: #ff00ff; stroke-width: 5; }
  .gr3 { fill: none; stroke: #00ff00; stroke-width: 5; }
  .yl { fill: none; stroke: #ffff00; stroke-width: 5; }
  .cy { fill: none; stroke: #00ffff; stroke-width: 5; }
  .dots { fill: none; stroke: #ffff00; stroke-width: 3; stroke-dasharray: 3 18; }
  .dotw { fill: none; stroke: #fff; stroke-width: 3; stroke-dasharray: 3 9; }
  .dotg { fill: none; stroke: #00ff00; stroke-width: 6; stroke-dasharray: 6 28; }
  .dotc { fill: none; stroke: #00ffff; stroke-width: 6; stroke-dasharray: 6 18; }
  .redframe { fill: none; stroke: #ff0000; stroke-width: 9; }
  .lb { fill: #ddd; font: 24px "Noto Sans CJK SC", sans-serif; }
  .gn { fill: #00e000; font: 700 22px "Liberation Mono", monospace; letter-spacing: -2.500px; }
  .yl1 { fill: none; stroke: #ffff00; stroke-width: 2; }
  .mg1 { fill: none; stroke: #ff00ff; stroke-width: 2; }
  .cy1 { fill: none; stroke: #00ffff; stroke-width: 1.500; }
  .cw1 { fill: none; stroke: #fff; stroke-width: 1; }
  .ydot { fill: none; stroke: #d0d060; stroke-width: 1; stroke-dasharray: 1 8; }
  .lb1 { fill: #ddd; font: 10px "Noto Sans CJK SC", sans-serif; }
  .gn1 { fill: #00e000; font: 10px "Liberation Mono", monospace; }
  .cell-empty { background: #ece9d8; }
  .dlg2 .sb { margin-top: 0; width: 15px; }
  .d2foot { flex: 1; display: flex; justify-content: flex-end; gap: 15px; align-items: flex-start; padding: 11px 34px 0 0; border-top: 1px solid #aca899; box-shadow: inset 0 1px 0 #fff; }

  .marks { position: absolute; left: 0; top: 0; width: 1383px; height: 761px; pointer-events: none; }
  .box { fill: none; stroke: #ff0000; stroke-width: 7; }
  .arrow { fill: none; stroke: #ff0000; stroke-width: 1; }
  .head { fill: #ff0000; }
</style>
